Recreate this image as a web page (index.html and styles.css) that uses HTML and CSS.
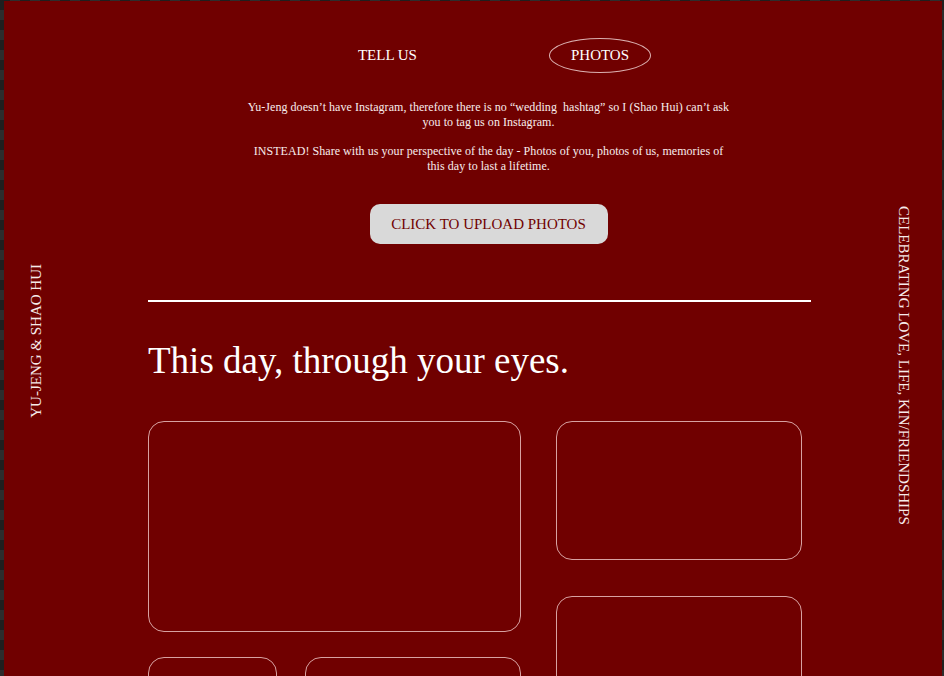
FILE: index.html
```html
<!DOCTYPE html>
<html lang="en">
<head>
<meta charset="utf-8">
<title>Photos</title>
<link rel="stylesheet" href="styles.css">
</head>
<body>
<div class="frame">
  <aside class="side side-left"><span class="side-label side-label-up">YU-JENG &amp; SHAO HUI</span></aside>
  <main class="main">
    <section class="top">
      <nav class="nav">
        <a class="nav-item">TELL US</a>
        <a class="nav-item nav-item-active">PHOTOS</a>
      </nav>
      <div class="intro">
        <p>Yu-Jeng doesn’t have Instagram, therefore there is no “wedding&nbsp; hashtag” so I (Shao Hui) can’t ask you to tag us on Instagram.</p>
        <p>INSTEAD! Share with us your perspective of the day - Photos of you, photos of us, memories of this day to last a lifetime.</p>
      </div>
      <button class="upload">CLICK TO UPLOAD PHOTOS</button>
    </section>
    <hr class="rule">
    <h1 class="title">This day, through your eyes.</h1>
    <div class="gallery">
      <div class="col col-left">
        <div class="card card-hero"></div>
        <div class="card-row">
          <div class="card card-small"></div>
          <div class="card card-mid"></div>
        </div>
      </div>
      <div class="col col-right">
        <div class="card card-side"></div>
        <div class="card card-tall"></div>
      </div>
    </div>
  </main>
  <aside class="side side-right"><span class="side-label">CELEBRATING LOVE, LIFE, KIN/FRIENDSHIPS</span></aside>
</div>
</body>
</html>
```
FILE: styles.css
```css
html, body {
  margin: 0;
  padding: 0;
}
body {
  width: 944px;
  height: 676px;
  overflow: hidden;
  background-color: #262626;
  background-image: conic-gradient(#2d2d2d 25%, #1f1f1f 25% 50%, #2d2d2d 50% 75%, #1f1f1f 75%);
  background-size: 20px 20px;
  font-family: "Liberation Serif", "Times New Roman", serif;
  color: #fff;
}
.frame {
  margin: 1px 2px 0 4px;
  height: 675px;
  overflow: hidden;
  background: #700000;
  display: grid;
  grid-template-columns: 64px 1fr 64px;
  padding-right: 6px;
}
.side {
  display: flex;
  justify-content: center;
  align-items: flex-start;
}
.side-left {
  padding-top: 263px;
}
.side-right {
  padding-top: 205px;
}
.side-label {
  writing-mode: vertical-rl;
  font-size: 15px;
  line-height: 18px;
  white-space: nowrap;
  color: #f6eaea;
}
.side-label-up {
  transform: rotate(180deg);
}
.main {
  padding: 37px 61px 0 80px;
  min-width: 0;
}
.top {
  padding-left: 18px;
}
.nav {
  display: flex;
  justify-content: center;
  gap: 110px;
  padding-left: 10px;
}
.nav-item {
  display: block;
  height: 35px;
  line-height: 33px;
  padding: 0 21px;
  border: 1px solid transparent;
  box-sizing: border-box;
  font-size: 15px;
  color: #fff;
  border-radius: 50%;
}
.nav-item-active {
  border-color: rgba(255, 235, 235, 0.75);
}
.intro {
  width: 488px;
  margin: 27px auto 0;
  text-align: center;
  font-size: 12px;
  line-height: 15px;
  letter-spacing: 0.05px;
  color: #f8eded;
}
.intro p {
  margin: 0 0 14px;
}
.intro p:last-child {
  margin-bottom: 0;
}
.upload {
  display: block;
  width: 238px;
  height: 40px;
  margin: 30px auto 0;
  padding: 0;
  border: none;
  border-radius: 10px;
  background: #d9d9d9;
  color: #700000;
  font-family: "Liberation Serif", "Times New Roman", serif;
  font-size: 15px;
  line-height: 40px;
}
.rule {
  margin: 56px 0 0;
  height: 2px;
  border: none;
  background: #fff;
}
.title {
  margin: 37px 0 0;
  font-size: 37px;
  line-height: 44px;
  font-weight: normal;
  color: #fff;
}
.gallery {
  margin-top: 38px;
  display: grid;
  grid-template-columns: 373px 246px;
  gap: 35px;
  align-items: start;
}
.col {
  display: flex;
  flex-direction: column;
}
.col-left {
  gap: 25px;
}
.col-right {
  gap: 36px;
}
.card {
  box-sizing: border-box;
  border: 1px solid rgba(255, 225, 225, 0.72);
  border-radius: 16px;
}
.card-hero {
  height: 211px;
}
.card-row {
  display: flex;
  gap: 28px;
}
.card-small {
  width: 129px;
  height: 200px;
}
.card-mid {
  flex: 1;
  height: 200px;
}
.card-side {
  height: 139px;
}
.card-tall {
  height: 220px;
}
```
